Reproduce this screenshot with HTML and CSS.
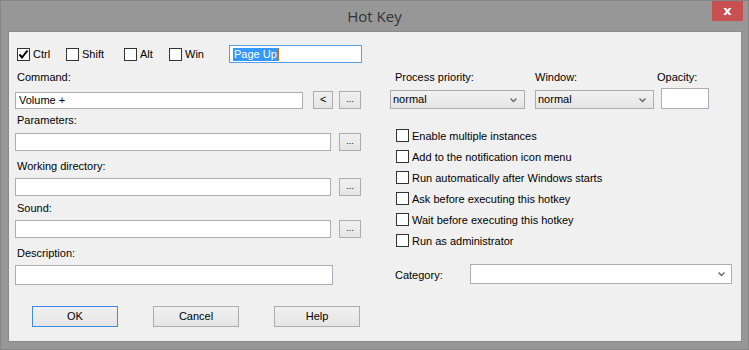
FILE: index.html
```html
<!DOCTYPE html>
<html lang="en">
<head>
    <meta charset="UTF-8">
    <title>Hot Key</title>
    <link rel="stylesheet" href="styles.css">
</head>
<body>
<div class="window">
    <div class="titlebar">
        <span class="title">Hot Key</span>
        <span class="close">x</span>
    </div>
    <div class="panel">
        <div class="mods">
            <label class="check w-ctrl"><span class="box"><svg width="11" height="11" viewBox="0 0 11 11"><polyline points="1.5,5.5 4,8.5 9.5,1.5" fill="none" stroke="#000" stroke-width="2"/></svg></span>Ctrl</label>
            <label class="check w-shift"><span class="box"></span>Shift</label>
            <label class="check w-alt"><span class="box"></span>Alt</label>
            <label class="check w-win"><span class="box"></span>Win</label>
            <div class="hotkey"><span class="selected">Page Up</span><span class="caret"></span></div>
        </div>

        <div class="main">
            <div class="left">
                <div class="label">Command:</div>
                <div class="row r-cmd">
                    <div class="field f-cmd">Volume +</div>
                    <div class="small-btn b-back">&lt;</div>
                    <div class="small-btn b-dots">...</div>
                </div>
                <div class="label l-params">Parameters:</div>
                <div class="row r-params">
                    <div class="field f-long"></div>
                    <div class="small-btn b-dots">...</div>
                </div>
                <div class="label l-dir">Working directory:</div>
                <div class="row r-dir">
                    <div class="field f-long"></div>
                    <div class="small-btn b-dots">...</div>
                </div>
                <div class="label l-sound">Sound:</div>
                <div class="row r-sound">
                    <div class="field f-long"></div>
                    <div class="small-btn b-dots">...</div>
                </div>
                <div class="label l-desc">Description:</div>
                <div class="field f-desc"></div>
            </div>

            <div class="right">
                <div class="selects">
                    <div class="col c-priority">
                        <div class="label">Process priority:</div>
                        <div class="combo cb-priority">normal<svg class="chev" width="7" height="5" viewBox="0 0 7 5"><polyline points="0.5,0.5 3.5,3.5 6.5,0.5" fill="none" stroke="#666" stroke-width="1.4"/></svg></div>
                    </div>
                    <div class="col c-window">
                        <div class="label">Window:</div>
                        <div class="combo cb-window">normal<svg class="chev" width="7" height="5" viewBox="0 0 7 5"><polyline points="0.5,0.5 3.5,3.5 6.5,0.5" fill="none" stroke="#666" stroke-width="1.4"/></svg></div>
                    </div>
                    <div class="col c-opacity">
                        <div class="label">Opacity:</div>
                        <div class="field f-opacity"></div>
                    </div>
                </div>

                <div class="options">
                    <label class="check option"><span class="box"></span>Enable multiple instances</label>
                    <label class="check option"><span class="box"></span>Add to the notification icon menu</label>
                    <label class="check option"><span class="box"></span>Run automatically after Windows starts</label>
                    <label class="check option"><span class="box"></span>Ask before executing this hotkey</label>
                    <label class="check option"><span class="box"></span>Wait before executing this hotkey</label>
                    <label class="check option"><span class="box"></span>Run as administrator</label>
                </div>

                <div class="category">
                    <span class="cat-label">Category:</span>
                    <div class="cat-combo"><svg class="chev" width="7" height="5" viewBox="0 0 7 5"><polyline points="0.5,0.5 3.5,3.5 6.5,0.5" fill="none" stroke="#666" stroke-width="1.4"/></svg></div>
                </div>
            </div>
        </div>

        <div class="buttons">
            <div class="btn default">OK</div>
            <div class="btn">Cancel</div>
            <div class="btn">Help</div>
        </div>
    </div>
</div>
</body>
</html>
```

FILE: styles.css
```css
body {
    margin: 0;
    padding: 0;
    font-family: "Liberation Sans", Arial, sans-serif;
    font-size: 11px;
    color: #000;
}
.window {
    width: 749px;
    height: 350px;
    box-sizing: border-box;
    background-color: #979797;
    border: 1px solid #858585;
}
.titlebar {
    position: relative;
    height: 30px;
    text-align: center;
}
.title {
    display: inline-block;
    margin-top: 5px;
    font-family: "Open Sans", "Noto Sans", sans-serif;
    font-size: 15px;
    line-height: 20px;
    color: #333;
}
.close {
    position: absolute;
    top: 0;
    right: 5px;
    width: 31px;
    height: 20px;
    background-color: #c75050;
    color: #fff;
    font-family: "DejaVu Sans", sans-serif;
    font-size: 13px;
    font-weight: bold;
    line-height: 19px;
    text-align: center;
}
.panel {
    width: 734px;
    height: 311px;
    margin-left: 7px;
    box-sizing: border-box;
    background-color: #f0f0f0;
    border: 1px solid #8a8a8a;
    padding-top: 13px;
}

/* checkbox */
.check {
    display: flex;
    align-items: center;
    white-space: nowrap;
}
.box {
    width: 13px;
    height: 13px;
    box-sizing: border-box;
    border: 1px solid #333;
    background: #fff;
    margin-right: 3px;
    flex: none;
    display: flex;
    align-items: center;
    justify-content: center;
}

.mods {
    display: flex;
    align-items: center;
    height: 18px;
    padding-left: 8px;
}
.w-ctrl { width: 49px; }
.w-shift { width: 58px; }
.w-alt { width: 45px; }
.w-win { width: 60px; }
.hotkey {
    width: 133px;
    height: 18px;
    box-sizing: border-box;
    border: 1px solid #569de5;
    background: #fff;
    display: flex;
    align-items: center;
    padding-left: 3px;
}
.selected {
    background: #3399ff;
    color: #fff;
    line-height: 13px;
    padding: 0 1px;
}
.caret {
    width: 1px;
    height: 13px;
    background: #d06a10;
}

.main {
    display: flex;
    padding-left: 6px;
    margin-top: 7px;
}
.left {
    width: 346px;
}
.right {
    width: 342px;
    margin-left: 29px;
}
.label {
    height: 15px;
    line-height: 15px;
    padding-left: 2px;
}
.row {
    display: flex;
    align-items: center;
}
.field {
    box-sizing: border-box;
    height: 18px;
    border: 1px solid #abadb3;
    background: #fff;
    line-height: 16px;
    padding-left: 3px;
}
.r-cmd { margin-top: 6px; }
.f-cmd { width: 289px; height: 17px; line-height: 15px; }
.f-long { width: 318px; }
.small-btn {
    box-sizing: border-box;
    height: 18px;
    border: 1px solid #acacac;
    background: linear-gradient(#f0f0f0, #e5e5e5);
    text-align: center;
    line-height: 14px;
}
.b-back {
    width: 20px;
    margin-left: 10px;
    line-height: 15px;
}
.b-dots {
    width: 22px;
    margin-left: 6px;
    font-size: 9px;
}
.r-params .b-dots, .r-dir .b-dots, .r-sound .b-dots {
    margin-left: 8px;
}
.l-params { margin-top: 4px; }
.r-params { margin-top: 5px; }
.l-dir { margin-top: 8px; }
.r-dir { margin-top: 4px; }
.l-sound { margin-top: 5px; }
.r-sound { margin-top: 4px; }
.l-desc { margin-top: 8px; }
.f-desc { width: 318px; height: 20px; margin-top: 4px; }

.selects {
    display: flex;
}
.col {
    display: flex;
    flex-direction: column;
}
.c-priority { width: 145px; }
.c-priority .label { padding-left: 5px; }
.c-window { width: 122px; }
.c-window .label { padding-left: 0; }
.c-opacity .label { padding-left: 0; }
.combo {
    position: relative;
    box-sizing: border-box;
    height: 19px;
    margin-top: 5px;
    border: 1px solid #acacac;
    background: linear-gradient(#f2f2f2, #e5e5e5);
    line-height: 17px;
    padding-left: 2px;
}
.cb-priority { width: 135px; }
.cb-window { width: 119px; }
.chev {
    position: absolute;
    right: 7px;
    top: 7px;
}
.f-opacity {
    width: 48px;
    height: 21px;
    margin-top: 3px;
    margin-left: 4px;
}

.options {
    margin-top: 16px;
    padding-left: 6px;
}
.option {
    height: 21px;
}

.category {
    display: flex;
    align-items: center;
    margin-top: 13px;
}
.cat-label {
    width: 75px;
    padding-left: 5px;
    padding-top: 2px;
}
.cat-combo {
    position: relative;
    width: 263px;
    height: 20px;
    box-sizing: border-box;
    border: 1px solid #abadb3;
    background: #fff;
}
.cat-combo .chev {
    right: 6px;
}

.buttons {
    display: flex;
    margin-top: 21px;
    padding-left: 23px;
}
.btn {
    width: 86px;
    height: 21px;
    box-sizing: border-box;
    border: 1px solid #acacac;
    background: linear-gradient(#f0f0f0, #e5e5e5);
    text-align: center;
    line-height: 19px;
    margin-right: 35px;
}
.btn.default {
    border-color: #3c8de6;
}
```
